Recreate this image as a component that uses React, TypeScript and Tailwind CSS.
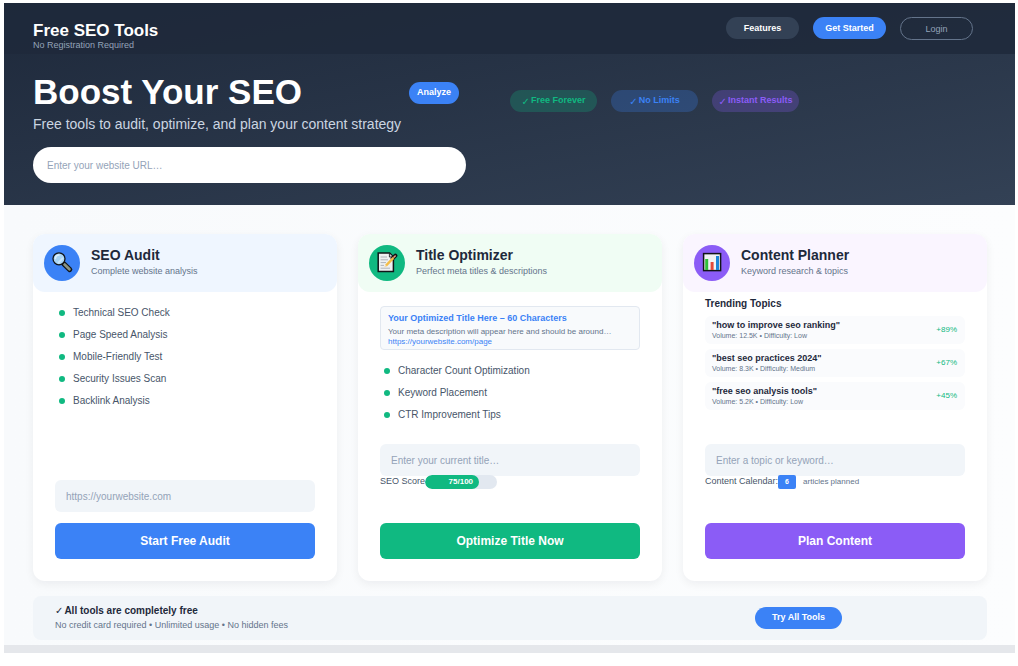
import type { ReactNode } from "react";

function MagnifierIcon() {
  return (
    <svg viewBox="0 0 24 24" className="h-6 w-6" aria-hidden="true">
      <path d="M13.6 12.6 L19.8 18.6" stroke="#111418" strokeWidth="5" strokeLinecap="round" />
      <path d="M14.6 13.6 L19.4 18.2" stroke="#8b9482" strokeWidth="2.8" strokeLinecap="round" />
      <circle cx="9" cy="7.8" r="6" fill="#a9d5f5" stroke="#111418" strokeWidth="1.3" />
      <path d="M5.4 7.6 A3.8 3.8 0 0 1 9 4" fill="none" stroke="#dff1fd" strokeWidth="1.5" strokeLinecap="round" />
      <path d="M8.6 11.6 L12.6 7.4" stroke="#c9e6fa" strokeWidth="1.8" strokeLinecap="round" />
    </svg>
  );
}

function MemoIcon() {
  return (
    <svg viewBox="0 0 24 24" className="h-6 w-6" aria-hidden="true">
      <path d="M3.2 2 H14.6 L18.4 5.8 V20.4 H3.2 Z" fill="#eef0f2" stroke="#111418" strokeWidth="1.5" />
      <path d="M14.4 2.4 V6 H18" fill="#c9ced3" stroke="#111418" strokeWidth="0.8" />
      <path d="M5.6 6 H12 M5.6 8.8 H13 M5.6 11.6 H11 M5.6 14.4 H9 M5.6 17.2 H15" stroke="#a8adb3" strokeWidth="0.9" />
      <path d="M17.6 7.4 L20.4 4.6" stroke="#111418" strokeWidth="4" strokeLinecap="round" />
      <path d="M11 14.6 L18.4 6.9" stroke="#f4bd48" strokeWidth="2.4" />
      <path d="M9.2 16.6 L10.2 13.8 L12 15.5 Z" fill="#f3d9ae" />
      <path d="M18.9 6.3 L20.2 5" stroke="#e8a07c" strokeWidth="1.6" strokeLinecap="round" />
    </svg>
  );
}

function ChartIcon() {
  return (
    <svg viewBox="0 0 24 24" className="h-6 w-6" aria-hidden="true">
      <rect x="3.6" y="2.6" width="17" height="17" fill="#f1f3f5" stroke="#111418" strokeWidth="1.5" />
      <rect x="5.2" y="8" width="3" height="11" fill="#2fbf3b" />
      <rect x="10.6" y="11" width="3" height="8" fill="#e2493a" />
      <rect x="16" y="5" width="3" height="14" fill="#1b86d8" />
    </svg>
  );
}

function Check() {
  return (
    <span className="font-['DejaVu_Sans','Liberation_Sans',sans-serif] text-[10px] font-bold">✓</span>
  );
}

type CardProps = {
  title: string;
  subtitle: string;
  icon: ReactNode;
  tint: string;
  disc: string;
  action: string;
  actionColor: string;
  placeholder: string;
  inputLabel: string;
  children: ReactNode;
  status?: ReactNode;
};

function ToolCard(props: CardProps) {
  return (
    <section className="flex min-h-[347px] min-w-0 flex-col rounded-xl bg-white shadow-[0_3px_10px_rgba(15,23,42,0.06)]">
      <header className={`flex h-[58px] items-center gap-[11px] rounded-xl px-[11px] ${props.tint}`}>
        <div className={`flex h-9 w-9 shrink-0 items-center justify-center rounded-full ${props.disc}`}>
          {props.icon}
        </div>
        <div className="pb-0.5">
          <h2 className="text-[14px] leading-[17px] font-bold text-[#1e293b]">{props.title}</h2>
          <p className="text-[9px] leading-[14px] text-[#64748b]">{props.subtitle}</p>
        </div>
      </header>
      <div className="flex grow flex-col px-[22px] pb-[22px]">
        <div className="grow">{props.children}</div>
        <input
          type="text"
          aria-label={props.inputLabel}
          placeholder={props.placeholder}
          className="h-8 w-full rounded-md bg-[#f1f5f9] px-[11px] text-[10px] text-[#1e293b] outline-none placeholder:text-[#94a3b8]"
        />
        {props.status}
        <button
          type="button"
          className={`mt-[11px] h-9 w-full rounded-md text-[12px] font-bold text-white ${props.actionColor}`}
        >
          {props.action}
        </button>
      </div>
    </section>
  );
}

function FeatureList({ items }: { items: string[] }) {
  return (
    <ul className="pl-1">
      {items.map((item) => (
        <li key={item} className="flex items-center gap-2 text-[10px] leading-[22px] text-[#475569]">
          <span className="h-1.5 w-1.5 rounded-full bg-[#10b981]" />
          {item}
        </li>
      ))}
    </ul>
  );
}

const topics = [
  { name: "how to improve seo ranking", volume: "12.5K", difficulty: "Low", growth: "+89%" },
  { name: "best seo practices 2024", volume: "8.3K", difficulty: "Medium", growth: "+67%" },
  { name: "free seo analysis tools", volume: "5.2K", difficulty: "Low", growth: "+45%" },
];

const badges = [
  { text: "Free Forever", style: "bg-[#10b981]/25 text-[#10b981]" },
  { text: "No Limits", style: "bg-[#3b82f6]/25 text-[#3b82f6]" },
  { text: "Instant Results", style: "bg-[#8b5cf6]/25 text-[#8b5cf6]" },
];

export default function App() {
  return (
    <div className="bg-white pt-[3px] pr-[3px] pl-1 font-['Liberation_Sans',Arial,sans-serif]">
      <div className="bg-linear-to-br from-[#1e293b] to-[#334155]">
        <header className="flex h-[51px] items-start justify-between bg-[#1e293b]/85 pr-[42px] pl-[29px]">
          <div className="pt-[18px]">
            <p className="text-[17px] leading-[19px] font-bold text-white">Free SEO Tools</p>
            <p className="text-[9px] leading-[11px] text-[#94a3b8]">No Registration Required</p>
          </div>
          <nav className="flex gap-[14px] pt-[14px] text-[9px]">
            <button type="button" className="h-[22px] w-[73px] rounded-full bg-[#334155] pt-0.5 font-bold text-white">
              Features
            </button>
            <button type="button" className="h-[22px] w-[73px] rounded-full bg-[#3b82f6] pt-0.5 font-bold text-white">
              Get Started
            </button>
            <button type="button" className="h-[23px] w-[73px] rounded-full border border-[#64748b] pt-0.5 text-[#94a3b8]">
              Login
            </button>
          </nav>
        </header>

        <div className="flex items-start gap-11 px-[29px] pt-[18px] pb-[22px]">
          <div className="w-[433px]">
            <div className="flex items-center justify-between pr-[7px]">
              <h1 className="text-[35px] leading-10 font-bold text-white">Boost Your SEO</h1>
              <button type="button" className="mt-0.5 h-[22px] rounded-full bg-[#3b82f6] px-2 text-[9px] font-bold text-white">
                Analyze
              </button>
            </div>
            <p className="text-[14px] leading-6 text-[#cbd5e1]">
              Free tools to audit, optimize, and plan your content strategy
            </p>
            <input
              type="url"
              aria-label="Website URL"
              placeholder="Enter your website URL…"
              className="mt-[11px] block h-9 w-full rounded-full bg-white px-[14px] text-[10px] text-[#1e293b] outline-none placeholder:text-[#94a3b8]"
            />
          </div>
          <ul className="flex gap-[14px] pt-[18px]">
            {badges.map((badge) => (
              <li
                key={badge.text}
                className={`flex h-[22px] w-[87px] items-center justify-center gap-px rounded-full text-[9px] font-bold whitespace-nowrap ${badge.style}`}
              >
                <Check />
                {badge.text}
              </li>
            ))}
          </ul>
        </div>
      </div>

      <main className="bg-linear-to-r from-[#f8fafc] to-[#fcfdfe] pt-[29px] pr-7 pb-[5px] pl-[29px]">
        <div className="grid grid-cols-3 gap-[21px]">
          <ToolCard
            title="SEO Audit"
            subtitle="Complete website analysis"
            icon={<MagnifierIcon />}
            tint="bg-[#eff6ff]"
            disc="bg-[#3b82f6]"
            inputLabel="Website to audit"
            placeholder="https://yourwebsite.com"
            action="Start Free Audit"
            actionColor="bg-[#3b82f6]"
          >
            <div className="pt-[10px]">
              <FeatureList
                items={[
                  "Technical SEO Check",
                  "Page Speed Analysis",
                  "Mobile-Friendly Test",
                  "Security Issues Scan",
                  "Backlink Analysis",
                ]}
              />
            </div>
          </ToolCard>

          <ToolCard
            title="Title Optimizer"
            subtitle="Perfect meta titles & descriptions"
            icon={<MemoIcon />}
            tint="bg-[#f0fdf4]"
            disc="bg-[#10b981]"
            inputLabel="Current title"
            placeholder="Enter your current title…"
            action="Optimize Title Now"
            actionColor="bg-[#10b981]"
            status={
              <div className="-mt-px mb-[23px] flex h-[14px] items-center text-[9px] text-[#475569]">
                <span>SEO Score</span>
                <div className="h-[14px] w-[72px] overflow-hidden rounded-full bg-[#e2e8f0]">
                  <div className="h-[14px] w-3/4 rounded-full bg-[#10b981] pr-[6px] text-right text-[8px] leading-[14px] font-bold text-white">
                    75/100
                  </div>
                </div>
              </div>
            }
          >
            <div className="pt-[14px]">
              <div className="h-11 rounded-sm border border-[#e2e8f0] bg-[#f8fafc] px-[7px] pt-1">
                <p className="truncate text-[9px] leading-[14px] font-bold text-[#3b82f6]">
                  Your Optimized Title Here – 60 Characters
                </p>
                <p className="pt-0.5 text-[8px] leading-[10px] whitespace-nowrap text-[#64748b]">
                  Your meta description will appear here and should be around…
                </p>
                <a href="#page" className="block text-[8px] leading-[9px] text-[#3b82f6]">
                  https://yourwebsite.com/page
                </a>
              </div>
              <div className="pt-[10px]">
                <FeatureList items={["Character Count Optimization", "Keyword Placement", "CTR Improvement Tips"]} />
              </div>
            </div>
          </ToolCard>

          <ToolCard
            title="Content Planner"
            subtitle="Keyword research & topics"
            icon={<ChartIcon />}
            tint="bg-[#faf5ff]"
            disc="bg-[#8b5cf6]"
            inputLabel="Topic or keyword"
            placeholder="Enter a topic or keyword…"
            action="Plan Content"
            actionColor="bg-[#8b5cf6]"
            status={
              <div className="-mt-px mb-[23px] flex h-[14px] items-center text-[9px] text-[#475569]">
                <span>Content Calendar:</span>
                <span className="h-[14px] w-[18px] rounded-xs bg-[#3b82f6] text-center text-[7px] leading-[14px] font-bold text-white">
                  6
                </span>
                <span className="ml-[7px] text-[8px] text-[#64748b]">articles planned</span>
              </div>
            }
          >
            <h3 className="pt-[5px] text-[10px] leading-[14px] font-bold text-[#1e293b]">Trending Topics</h3>
            <ul className="flex flex-col gap-[5px] pt-[5px]">
              {topics.map((topic) => (
                <li key={topic.name} className="flex h-7 items-center justify-between rounded-md bg-[#fafbfd] pr-2 pl-[7px]">
                  <div className="pb-px">
                    <p className="text-[9px] leading-[11px] font-bold text-[#1e293b]">"{topic.name}"</p>
                    <p className="text-[7px] leading-[9px] text-[#64748b]">
                      Volume: {topic.volume} • Difficulty: {topic.difficulty}
                    </p>
                  </div>
                  <span className="text-[8px] text-[#10b981]">{topic.growth}</span>
                </li>
              ))}
            </ul>
          </ToolCard>
        </div>

        <div className="mt-[15px] flex h-11 items-center justify-between rounded-lg bg-[#f1f5f9] pr-[145px] pl-[22px]">
          <div>
            <p className="flex items-center gap-px text-[10px] leading-[14px] font-bold text-[#1e293b]">
              <Check />
              All tools are completely free
            </p>
            <p className="text-[9px] leading-[14px] text-[#64748b]">
              No credit card required • Unlimited usage • No hidden fees
            </p>
          </div>
          <button type="button" className="h-[22px] w-[87px] rounded-full bg-[#3b82f6] text-[9px] font-bold text-white">
            Try All Tools
          </button>
        </div>
      </main>
      <div className="h-2 bg-[#e5e7eb]" />
    </div>
  );
}
